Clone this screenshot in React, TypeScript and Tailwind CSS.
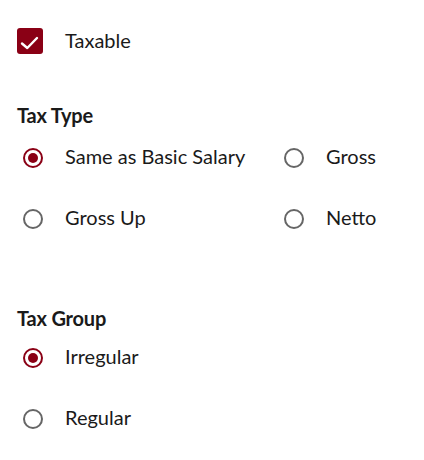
import React from "react";

function Radio({ checked, label }: { checked?: boolean; label: string }) {
  return (
    <div className="flex h-[61px] items-center gap-[16px]">
      <div className="flex w-[32px] items-center justify-center">
        {checked ? (
          <div className="flex h-[20px] w-[20px] items-center justify-center rounded-full border-[2.5px] border-[#8a0015]">
            <div className="h-[10px] w-[10px] rounded-full bg-[#8a0015]" />
          </div>
        ) : (
          <div className="h-[20px] w-[20px] rounded-full border-[2px] border-[#666666]" />
        )}
      </div>
      <span className="pb-[4px] text-[20px] leading-[24px] text-[#1a1a1a]">{label}</span>
    </div>
  );
}

export default function App() {
  return (
    <div
      className="min-h-[460px] w-[424px] bg-white px-[17px] pt-[28px]"
      style={{ fontFamily: "Lato, 'Noto Sans', sans-serif" }}
    >
      <div className="flex h-[26px] items-center gap-[22px]">
        <div className="flex h-[26px] w-[26px] items-center justify-center rounded-[3px] bg-[#8a0015]">
          <svg width="26" height="26" viewBox="0 0 26 26" fill="none">
            <path
              d="M5 15.5L10.3 20L20 10"
              stroke="white"
              strokeWidth="2.4"
              strokeLinecap="round"
              strokeLinejoin="round"
            />
          </svg>
        </div>
        <span className="pb-[3px] text-[20px] leading-[24px] text-[#1a1a1a]">Taxable</span>
      </div>

      <h2 className="mt-[49px] text-[20px] font-bold leading-[24px] tracking-[-0.2px] text-[#1a1a1a]">
        Tax Type
      </h2>
      <div className="grid grid-cols-[261px_1fr]">
        <Radio checked label="Same as Basic Salary" />
        <Radio label="Gross" />
        <Radio label="Gross Up" />
        <Radio label="Netto" />
      </div>

      <h2 className="mb-[-3px] mt-[57px] text-[20px] font-bold leading-[24px] tracking-[-0.2px] text-[#1a1a1a]">
        Tax Group
      </h2>
      <div className="flex flex-col">
        <Radio checked label="Irregular" />
        <Radio label="Regular" />
      </div>
    </div>
  );
}
